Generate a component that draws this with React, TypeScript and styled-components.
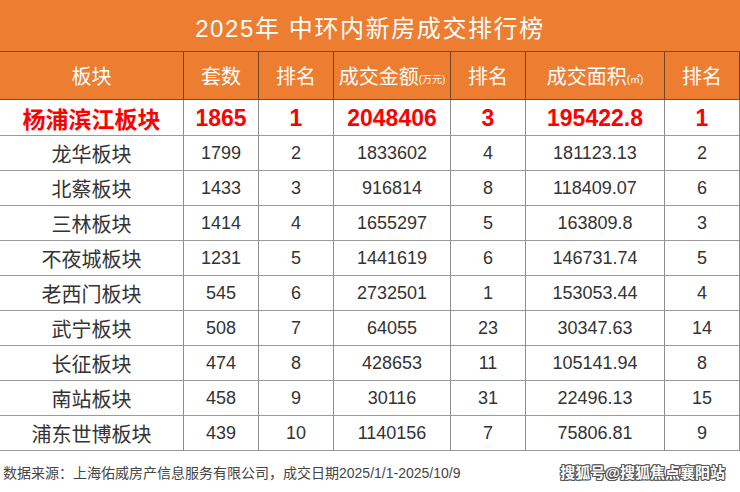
import styled, { createGlobalStyle } from 'styled-components';

const GlobalStyle = createGlobalStyle`
  html, body {
    margin: 0;
    padding: 0;
    background: #ffffff;
  }
  body {
    font-family: "Liberation Sans", "Noto Sans CJK SC", sans-serif;
  }
`;

const Page = styled.div`
  width: 740px;
  height: 492px;
  display: flex;
  flex-direction: column;
  background: #ffffff;
  overflow: hidden;
`;

const Title = styled.div`
  height: 52px;
  box-sizing: border-box;
  background: #ed7d31;
  border-bottom: 1px solid #8a4a1f;
  color: #ffffff;
  font-size: 24px;
  letter-spacing: 1.6px;
  display: flex;
  align-items: center;
  justify-content: center;
  padding-top: 2px;
`;

const Grid = styled.div`
  display: grid;
  grid-template-columns: 184px 75px 75px 117px 75px 139px 75px;
  grid-template-rows: 48px 36px repeat(9, 35px);
`;

const HeadCell = styled.div`
  box-sizing: border-box;
  background: #ed7d31;
  color: #ffffff;
  font-size: 20px;
  display: flex;
  align-items: center;
  justify-content: center;
  border-right: 1px solid #6e4426;
  border-bottom: 1px solid #8a4a1f;
`;

const Unit = styled.span`
  font-size: 10px;
  margin-top: 6px;
`;

const Cell = styled.div<{ $name?: boolean; $top?: boolean }>`
  box-sizing: border-box;
  display: flex;
  align-items: center;
  justify-content: center;
  border-right: 1px solid #8c8c8c;
  border-bottom: 1px solid #9a9a9a;
  color: ${(p) => (p.$top ? '#ff0000' : '#333333')};
  font-weight: ${(p) => (p.$top ? 700 : 400)};
  font-size: ${(p) => (p.$top ? '23px' : p.$name ? '20px' : '18px')};
  padding-top: 1px;
`;

const Footer = styled.div`
  flex: 1;
  display: flex;
  align-items: center;
  justify-content: space-between;
  padding: 0 15px 0 3px;
`;

const Source = styled.span`
  font-size: 14px;
  color: #444444;
`;

const Mark = styled.span`
  font-size: 15px;
  font-weight: 700;
  color: #ffffff;
  text-shadow:
    1px 0 0 #555, -1px 0 0 #555, 0 1px 0 #555, 0 -1px 0 #555,
    1px 1px 0 #555, -1px -1px 0 #555, 1px -1px 0 #555, -1px 1px 0 #555;
`;

type Row = [string, string, string, string, string, string, string];

const rows: Row[] = [
  ['杨浦滨江板块', '1865', '1', '2048406', '3', '195422.8', '1'],
  ['龙华板块', '1799', '2', '1833602', '4', '181123.13', '2'],
  ['北蔡板块', '1433', '3', '916814', '8', '118409.07', '6'],
  ['三林板块', '1414', '4', '1655297', '5', '163809.8', '3'],
  ['不夜城板块', '1231', '5', '1441619', '6', '146731.74', '5'],
  ['老西门板块', '545', '6', '2732501', '1', '153053.44', '4'],
  ['武宁板块', '508', '7', '64055', '23', '30347.63', '14'],
  ['长征板块', '474', '8', '428653', '11', '105141.94', '8'],
  ['南站板块', '458', '9', '30116', '31', '22496.13', '15'],
  ['浦东世博板块', '439', '10', '1140156', '7', '75806.81', '9'],
];

const App = () => {
  return (
    <>
      <GlobalStyle />
      <Page>
        <Title>2025年 中环内新房成交排行榜</Title>
        <Grid>
          <HeadCell>板块</HeadCell>
          <HeadCell>套数</HeadCell>
          <HeadCell>排名</HeadCell>
          <HeadCell>
            成交金额<Unit>(万元)</Unit>
          </HeadCell>
          <HeadCell>排名</HeadCell>
          <HeadCell>
            成交面积<Unit>(㎡)</Unit>
          </HeadCell>
          <HeadCell>排名</HeadCell>
          {rows.map((row, i) =>
            row.map((value, j) => (
              <Cell key={`${i}-${j}`} $name={j === 0} $top={i === 0}>
                {value}
              </Cell>
            ))
          )}
        </Grid>
        <Footer>
          <Source>数据来源：上海佑威房产信息服务有限公司，成交日期2025/1/1-2025/10/9</Source>
          <Mark>搜狐号@搜狐焦点襄阳站</Mark>
        </Footer>
      </Page>
    </>
  );
};

export default App;
